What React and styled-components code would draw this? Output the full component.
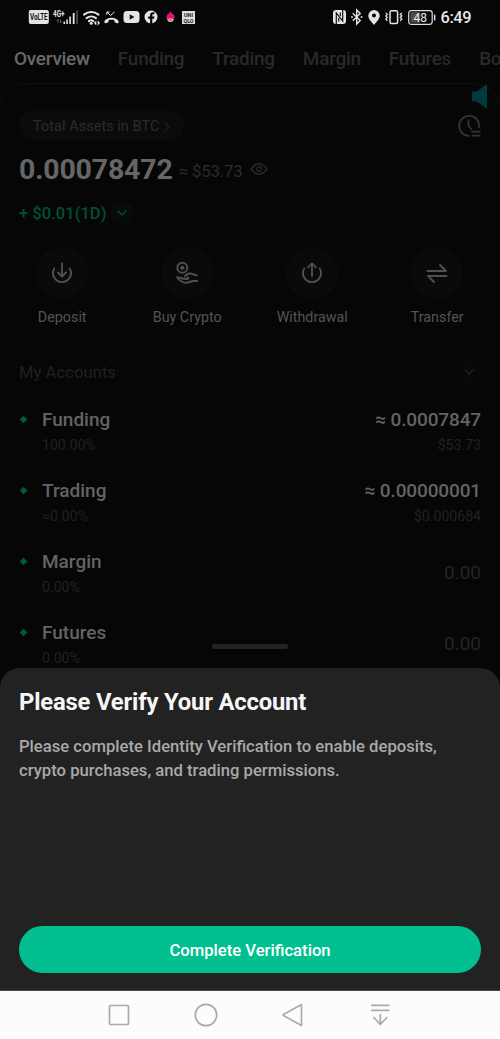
import React from "react";
import styled, { createGlobalStyle } from "styled-components";

const GlobalStyle = createGlobalStyle`
  * {
    box-sizing: border-box;
  }
  body {
    margin: 0;
    background: #060606;
    font-family: Roboto, "Liberation Sans", sans-serif;
  }
`;

const Screen = styled.div`
  position: relative;
  display: flex;
  flex-direction: column;
  width: 500px;
  height: 1039px;
  overflow: hidden;
  background: #060606;
`;

const StatusBar = styled.header`
  display: flex;
  justify-content: space-between;
  align-items: center;
  flex: none;
  height: 34px;
  padding: 0 28.5px 0 28px;
`;

const StatusGroup = styled.div`
  display: flex;
  align-items: center;
`;

const StatusIcon = styled.svg`
  display: block;
  flex: none;
  overflow: visible;
  margin-left: ${({ $gap }) => $gap || 0}px;
`;

const Clock = styled.span`
  margin-left: 5px;
  padding-top: 1px;
  width: 31px;
  font-size: 16.4px;
  font-weight: 500;
  letter-spacing: -0.4px;
  line-height: 20px;
  color: #e6e6e6;
  white-space: nowrap;
`;

const Tabs = styled.nav`
  display: flex;
  align-items: center;
  flex: none;
  gap: 28px;
  height: 49px;
  padding-left: 14px;
`;

const Tab = styled.a`
  flex: none;
  font-size: 19px;
  font-weight: 500;
  letter-spacing: -0.27px;
  color: ${({ $active }) => ($active ? "#696969" : "#292929")};
`;

/* 1px wider than the screen on both sides, so only the rounded top edge shows */
const Panel = styled.main`
  position: relative;
  flex: none;
  height: 608px;
  margin: 0 -1px;
  padding: 27px 19px 0;
  border: 1px solid #101010;
  border-radius: 28px 28px 0 0;
`;

const Speaker = styled.svg`
  position: absolute;
  top: 0;
  right: 13px;
`;

const PillRow = styled.div`
  display: flex;
  align-items: center;
  justify-content: space-between;
  height: 29px;
`;

const AssetsPill = styled.div`
  display: flex;
  align-items: center;
  gap: 5px;
  height: 29px;
  padding: 2px 14px 0;
  border-radius: 15px;
  background: #0b0b0b;
  color: #2b2b2b;
  font-size: 14.5px;
  letter-spacing: 0.03px;
`;

const BalanceRow = styled.div`
  display: flex;
  align-items: center;
  height: 32px;
  margin-top: 13px;
`;

const Balance = styled.span`
  font-size: 28.5px;
  font-weight: 700;
  letter-spacing: -0.18px;
  color: #666;
`;

const FiatValue = styled.span`
  margin: 4px 7px 0 6px;
  font-size: 16.8px;
  letter-spacing: -0.15px;
  color: #2b2b2b;
`;

const ChangeRow = styled.div`
  display: flex;
  align-items: center;
  gap: 6px;
  height: 20px;
  margin-top: 18px;
  font-size: 16.6px;
  font-weight: 500;
  color: #004f37;
`;

const Chevron = styled.span`
  display: flex;
  align-items: center;
  justify-content: center;
  width: ${({ $size }) => $size}px;
  height: ${({ $size }) => $size}px;
  border-radius: 4px;
  background: ${({ $tint }) => $tint};
`;

const Actions = styled.div`
  display: grid;
  grid-template-columns: repeat(4, 125px);
  height: 82px;
  margin: 24px -19px 0;
`;

const Action = styled.div`
  display: flex;
  flex-direction: column;
  align-items: center;
  gap: 8px;
  padding-right: 0.6px;
  font-size: 14.3px;
  line-height: 20px;
  color: #545454;
`;

const ActionCircle = styled.div`
  display: flex;
  align-items: center;
  justify-content: center;
  width: 52px;
  height: 52px;
  border-radius: 50%;
  background: #0a0a0a;
`;

const SectionTitle = styled.div`
  display: flex;
  align-items: center;
  justify-content: space-between;
  height: 24px;
  margin-top: 31px;
  font-size: 16.6px;
  letter-spacing: 0.05px;
  color: #202020;
`;

const AccountList = styled.div`
  padding-top: 23px;
`;

const Account = styled.div`
  display: flex;
  height: 71px;
`;

const Diamond = styled.svg`
  flex: none;
  margin: 7.5px 14px 0 0;
`;

const AccountSide = styled.div`
  display: flex;
  flex-direction: column;
  align-items: ${({ $end }) => ($end ? "flex-end" : "flex-start")};
  margin-left: ${({ $end }) => ($end ? "auto" : "0")};
`;

const AccountMain = styled.span`
  font-size: 19px;
  font-weight: 500;
  letter-spacing: ${({ $amount }) => ($amount ? "-0.13px" : "0")};
  line-height: 26px;
  color: #636363;
`;

const AccountSub = styled.span`
  font-size: 14.1px;
  line-height: 25px;
  color: #212121;
`;

const EmptyValue = styled.span`
  margin-top: 11px;
  font-size: 19px;
  line-height: 26px;
  color: #242424;
`;

const Sheet = styled.section`
  position: absolute;
  top: 668px;
  left: 0;
  right: 0;
  display: flex;
  flex-direction: column;
  height: 323px;
  padding: 18px 19px 17px;
  border-radius: 20px 20px 0 0;
  background: #222;
  border-bottom: 1px solid #4a4345;
`;

const Handle = styled.span`
  position: absolute;
  top: -24px;
  left: 212px;
  width: 76px;
  height: 5px;
  border-radius: 3px;
  background: #232323;
`;

const SheetTitle = styled.h1`
  margin: 0;
  font-size: 23.8px;
  font-weight: 700;
  line-height: 32px;
  letter-spacing: -0.18px;
  color: #f6f6f6;
`;

const SheetText = styled.p`
  margin: 17px 0 0;
  font-size: 16.65px;
  font-weight: 500;
  line-height: 24px;
  color: #a9a9a9;
  white-space: nowrap;
`;

const VerifyButton = styled.button`
  flex: none;
  height: 47px;
  margin-top: auto;
  padding: 2px 0 0;
  border: 0;
  border-radius: 24px;
  background: #02bf90;
  color: #fff;
  font-family: inherit;
  font-size: 16.65px;
  font-weight: 500;
`;

const NavBar = styled.footer`
  display: flex;
  align-items: center;
  justify-content: center;
  flex: none;
  gap: 63px;
  height: 48px;
  margin-top: auto;
  padding-right: 2px;
  background: #fcfcfc;
`;

const NavIcon = styled.svg`
  display: block;
  fill: none;
  stroke: #aaa;
  stroke-width: 1.7;
  stroke-linejoin: round;
  stroke-linecap: round;
`;

const LineIcon = styled.svg`
  display: block;
  flex: none;
  fill: none;
  stroke: ${({ $color }) => $color};
  stroke-width: ${({ $weight }) => $weight || 1.6};
  stroke-linecap: round;
  stroke-linejoin: round;
`;

const tabs = [
  { label: "Overview", active: true },
  { label: "Funding" },
  { label: "Trading" },
  { label: "Margin" },
  { label: "Futures" },
  { label: "Bots" }
];

const actions = [
  {
    label: "Deposit",
    icon: (
      <>
        <path d="M4.2 7.6a9 9 0 1 0 15.6 0" />
        <path d="M12 2.5v12.600M8 11.500l4 4 4-4" />
      </>
    )
  },
  {
    label: "Buy Crypto",
    icon: (
      <>
        <circle cx="7.3" cy="6.8" r="5" />
        <path d="M7.3 5.500l1.300 1.300-1.300 1.300L6 6.800z" />
        <path d="M10 15.300c2-2.800 5-3.400 8-2.200 1.200.5 2.500 1.200 3.800 1.100" />
        <path d="M12 17.700H7.500M13.200 16.300c.8 1-.2 1.800-1.600 1.800L7 17.500c-1.600-1.100-3.300-1.300-5-1 1.700 2 4.500 5 8.300 5.200 3.700.2 5.200-1.600 7.700-1.700h4" />
      </>
    )
  },
  {
    label: "Withdrawal",
    icon: (
      <>
        <path d="M4.200 7.600a9 9 0 1 0 15.600 0" />
        <path d="M12 15V2.500M8 6.400l4-4 4 4" />
      </>
    )
  },
  {
    label: "Transfer",
    icon: (
      <>
        <path d="M2.500 10h18.500l-6-6" />
        <path d="M21.500 15H3l6 6" />
      </>
    )
  }
];

const accounts = [
  { name: "Funding", share: "100.00%", value: "≈ 0.0007847", fiat: "$53.73" },
  {
    name: "Trading",
    share: "≈0.00%",
    value: "≈ 0.00000001",
    fiat: "$0.000684"
  },
  { name: "Margin", share: "0.00%" },
  { name: "Futures", share: "0.00%" }
];

function StatusLeft() {
  return (
    <StatusGroup>
      <StatusIcon width="21" height="14" viewBox="0 0 21 14">
        <rect x="0.8" width="20" height="14" rx="2" fill="#e4e4e4" />
        <text
          x="2"
          y="10.3"
          fontSize="9"
          fontWeight="700"
          textLength="17.6"
          lengthAdjust="spacingAndGlyphs"
          fill="#151515"
        >
          VoLTE
        </text>
      </StatusIcon>
      <StatusIcon $gap={4} width="26" height="16" viewBox="0 0 26 16">
        <text
          x="0"
          y="7.5"
          fontSize="9"
          fontWeight="700"
          textLength="11.5"
          lengthAdjust="spacingAndGlyphs"
          fill="#e4e4e4"
        >
          4G+
        </text>
        <g stroke="#5c5c5c" strokeWidth="1" fill="none">
          <path d="M5 14V10.500L3.500 12M7.500 10.500V14L9 12.500" />
        </g>
        <g fill="#e4e4e4">
          <rect x="10.5" y="12.5" width="1.6" height="2.5" />
          <rect x="13.3" y="10.5" width="1.6" height="4.5" />
          <rect x="16.3" y="7.5" width="1.6" height="7.5" />
          <rect x="19.8" y="4" width="1.8" height="11" />
          <rect x="23.2" y="1.5" width="1.8" height="13.5" fill="#4a4a4a" />
        </g>
      </StatusIcon>
      <StatusIcon $gap={4} width="18" height="15" viewBox="0 0 18 15">
        <g fill="none" stroke="#e4e4e4" strokeWidth="2" strokeLinecap="round">
          <path d="M1 4.600a11.500 11.500 0 0 1 14.500 0" />
          <path d="M3.500 8.100a7.600 7.600 0 0 1 9.500 0" />
          <path d="M5.900 11.100a4 4 0 0 1 4.500 0" />
        </g>
        <circle cx="8.2" cy="13.2" r="1.5" fill="#e4e4e4" />
        <path d="M11 13l2.300-2.500v5zM17 13l-2.300-2.500v5z" fill="#e4e4e4" />
      </StatusIcon>
      <StatusIcon $gap={2.5} width="15" height="14" viewBox="0 0 15 14">
        <path
          d="M.6 12.800c-.8-1.400.3-2.700 2.100-3.700 3-1.700 6.600-1.700 9.600 0 1.800 1 2.900 2.300 2.100 3.700-.5.800-1.100.6-2 .2l-1.800-.8-.3-2.100c-1.800-.6-3.800-.6-5.600 0l-.3 2.100-1.800.8c-.9.400-1.500.6-2-.2z"
          fill="#e4e4e4"
        />
        <path
          d="M2.800 4.800V2h2.800M3 2.200l3.700 3.300 3.800-3.700"
          fill="none"
          stroke="#e4e4e4"
          strokeWidth="1"
        />
      </StatusIcon>
      <StatusIcon $gap={4} width="17" height="12" viewBox="0 0 17 12">
        <rect x="0.5" width="16" height="12" rx="3.5" fill="#e4e4e4" />
        <path d="M6.700 3.300v5.400L11.500 6z" fill="#111" />
      </StatusIcon>
      <StatusIcon $gap={4} width="14" height="14" viewBox="0 0 14 14">
        <circle cx="7" cy="7" r="6.5" fill="#e4e4e4" />
        <path
          d="M6.100 14V8.700H4.200V6.600h1.900V5.200c0-2 1.100-2.900 2.800-2.900h1.500v1.900H9.300c-.7 0-1 .4-1 1v1.400h2.100l-.3 2.100H8.300V14z"
          fill="#080808"
        />
      </StatusIcon>
      <StatusIcon $gap={8} width="9" height="12" viewBox="0 0 9 12">
        <circle cx="4.5" cy="7.8" r="3.2" fill="#f2c4a0" />
        <path
          d="M.4 7C.2 4.700 1.300 3.500 3 2.600L4.400.5 6 2.600C7.700 3.500 8.800 4.700 8.600 7L6.800 8 4.500 7.200 2.200 8z"
          fill="#e3107c"
        />
        <path d="M2.800 9h3.400" stroke="#6b2a2a" strokeWidth=".8" />
      </StatusIcon>
      <StatusIcon $gap={7.5} width="13" height="13" viewBox="0 0 13 13">
        <rect width="13" height="13" fill="#dcdcdc" />
        <g fontSize="6" fontWeight="700" fill="#1b1b1b">
          <text x="2" y="6" textLength="9" lengthAdjust="spacingAndGlyphs">
            UNI
          </text>
          <text x="1.5" y="11.5" textLength="10" lengthAdjust="spacingAndGlyphs">
            QLO
          </text>
        </g>
      </StatusIcon>
    </StatusGroup>
  );
}

function StatusRight() {
  return (
    <StatusGroup>
      <StatusIcon width="13" height="14" viewBox="0 0 13 14">
        <rect width="13" height="14" rx="3" fill="#e4e4e4" />
        <path
          d="M3.300 14V3l6.400 8V0M5.700 11.500V8M7.300 2.500V6"
          fill="none"
          stroke="#111"
          strokeWidth="1.2"
        />
      </StatusIcon>
      <StatusIcon $gap={5} width="12" height="16" viewBox="0 0 12 16">
        <path
          d="M1.800 4.300l7.400 7.200L5.700 15V1l3.500 3.500-7.400 7.200"
          fill="none"
          stroke="#e4e4e4"
          strokeWidth="1.4"
        />
        <circle cx="1" cy="8" r=".9" fill="#e4e4e4" />
        <circle cx="10.6" cy="8" r=".9" fill="#e4e4e4" />
      </StatusIcon>
      <StatusIcon $gap={5} width="12" height="15" viewBox="0 0 12 15">
        <path
          fillRule="evenodd"
          d="M6 0a5.700 5.700 0 0 0-5.700 5.800C.3 9 3.500 12 6 15c2.500-3 5.700-6 5.700-9.200A5.700 5.700 0 0 0 6 0zm0 3.600a2 2 0 1 1 0 4 2 2 0 0 1 0-4z"
          fill="#e4e4e4"
        />
      </StatusIcon>
      <StatusIcon $gap={5} width="18" height="14" viewBox="0 0 18 14">
        <g fill="none" stroke="#e4e4e4">
          <rect x="5" y=".8" width="7.6" height="12.6" rx="1.5" strokeWidth="1.5" />
          <path
            d="M.8 3l1.500 1.300L.8 6l1.500 1.500L.8 9l1.500 1.800M16.800 3l-1.500 1.300L16.800 6l-1.500 1.500L16.800 9l-1.500 1.800"
            strokeWidth="1.3"
          />
        </g>
      </StatusIcon>
      <StatusIcon $gap={5} width="28" height="15" viewBox="0 0 28 15">
        <rect
          x=".7"
          y=".7"
          width="23.5"
          height="13.6"
          rx="2.5"
          fill="none"
          stroke="#dcdcdc"
          strokeWidth="1.2"
        />
        <rect x="2.3" y="2.3" width="10" height="10.4" rx="1" fill="#4c4c4c" />
        <rect x="25.9" y="4.5" width="1.5" height="6" rx=".5" fill="#dcdcdc" />
        <text
          x="12.3"
          y="11.7"
          textAnchor="middle"
          fontSize="12"
          fontWeight="400"
          fill="#ececec"
        >
          48
        </text>
      </StatusIcon>
      <Clock>6:49</Clock>
    </StatusGroup>
  );
}

function AccountRow({ name, share, value, fiat }) {
  return (
    <Account>
      <Diamond width="9" height="9" viewBox="0 0 9 9">
        <path
          d="M4.500 1.200L7.800 4.500 4.500 7.800 1.200 4.500z"
          fill="#005c41"
          stroke="#005c41"
          strokeLinejoin="round"
        />
      </Diamond>
      <AccountSide>
        <AccountMain>{name}</AccountMain>
        <AccountSub>{share}</AccountSub>
      </AccountSide>
      <AccountSide $end>
        {value ? (
          <>
            <AccountMain $amount>{value}</AccountMain>
            <AccountSub>{fiat}</AccountSub>
          </>
        ) : (
          <EmptyValue>0.00</EmptyValue>
        )}
      </AccountSide>
    </Account>
  );
}

export default function App() {
  return (
    <Screen>
      <GlobalStyle />
      <StatusBar>
        <StatusLeft />
        <StatusRight />
      </StatusBar>
      <Tabs>
        {tabs.map(({ label, active }) => (
          <Tab key={label} $active={active}>
            {label}
          </Tab>
        ))}
      </Tabs>
      <Panel>
        <Speaker width="15" height="25" viewBox="0 0 15 25">
          <path d="M0 7.500h5L15 0v25L5 17.500H0z" fill="#003b3a" />
        </Speaker>
        <PillRow>
          <AssetsPill>
            Total Assets in BTC
            <LineIcon $color="#222" $weight={1.2} width="6" height="10">
              <path d="M1 1l4 4-4 4" />
            </LineIcon>
          </AssetsPill>
          <LineIcon $color="#343434" $weight={1.8} width="24" height="24">
            <path d="M11.800 21.900A10 10 0 1 1 22 13.500M11.500 6.500v5.500l3 3.500M15.300 17.700h7.500M15.300 21.700h7.500" />
          </LineIcon>
        </PillRow>
        <BalanceRow>
          <Balance>0.00078472</Balance>
          <FiatValue>≈ $53.73</FiatValue>
          <LineIcon $color="#2c2c2c" $weight={1.3} width="18" height="12">
            <path d="M1 6q8-10.500 16 0-8 10.500-16 0z" />
            <circle cx="9" cy="6" r="2.3" />
          </LineIcon>
        </BalanceRow>
        <ChangeRow>
          + $0.01(1D)
          <Chevron $size={20} $tint="#060c0a">
            <LineIcon $color="#00513a" $weight={1.4} width="10" height="6">
              <path d="M1 1l4 4 4-4" />
            </LineIcon>
          </Chevron>
        </ChangeRow>
        <Actions>
          {actions.map(({ label, icon }) => (
            <Action key={label}>
              <ActionCircle>
                <LineIcon
                  $color="#505050"
                  $weight={1.9}
                  width="24"
                  height="24"
                  viewBox="0 0 24 24"
                >
                  {icon}
                </LineIcon>
              </ActionCircle>
              {label}
            </Action>
          ))}
        </Actions>
        <SectionTitle>
          My Accounts
          <Chevron $size={24} $tint="#080808">
            <LineIcon $color="#222" $weight={1.4} width="10" height="6">
              <path d="M1 1l4 4 4-4" />
            </LineIcon>
          </Chevron>
        </SectionTitle>
        <AccountList>
          {accounts.map(account => (
            <AccountRow key={account.name} {...account} />
          ))}
        </AccountList>
      </Panel>
      <Sheet>
        <Handle />
        <SheetTitle>Please Verify Your Account</SheetTitle>
        <SheetText>
          Please complete Identity Verification to enable deposits,
          <br />
          crypto purchases, and trading permissions.
        </SheetText>
        <VerifyButton>Complete Verification</VerifyButton>
      </Sheet>
      <NavBar>
        <NavIcon width="24" height="24">
          <rect x="2.5" y="2.5" width="19" height="19" rx="1" />
        </NavIcon>
        <NavIcon width="24" height="24">
          <circle cx="12" cy="12" r="10.7" />
        </NavIcon>
        <NavIcon width="24" height="24">
          <path d="M20.500 1.500v21L2.500 12.600q-.8-.6 0-1.200z" />
        </NavIcon>
        <NavIcon width="24" height="24">
          <path d="M3.800 2.300h17M3.800 7.300h17M12.300 11.500v10M5.800 14.500l6.500 7 6.500-7" />
        </NavIcon>
      </NavBar>
    </Screen>
  );
}
